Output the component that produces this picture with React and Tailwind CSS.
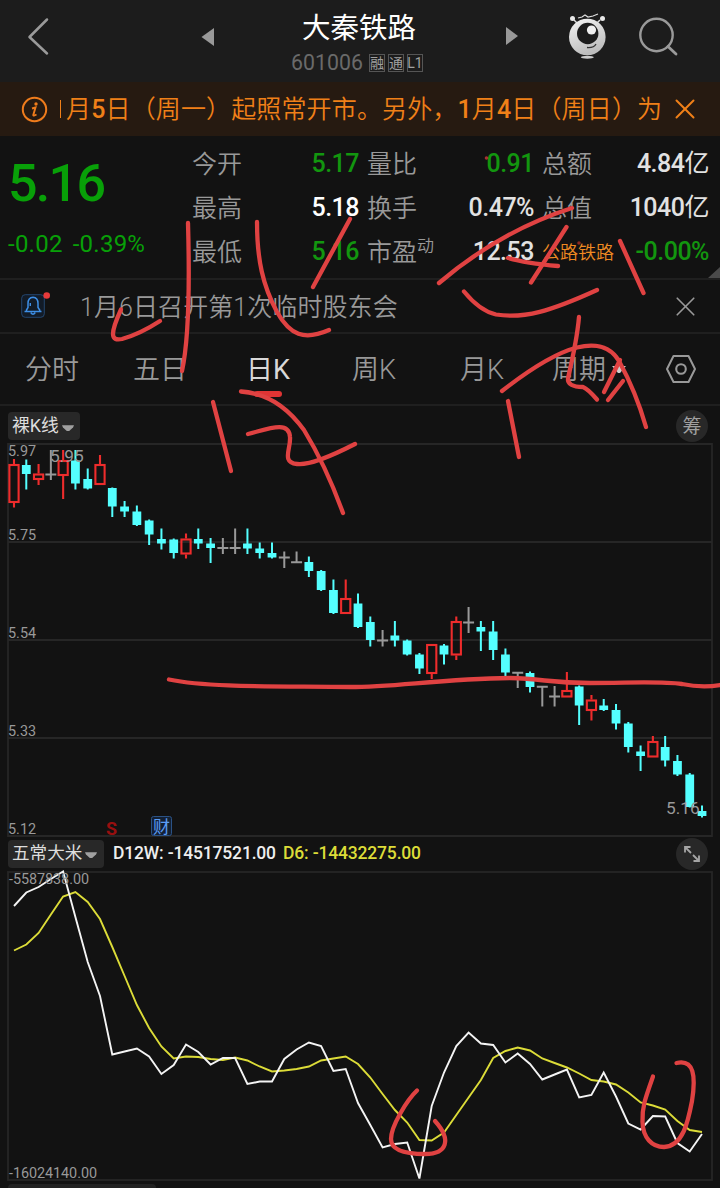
import React from 'react';
import { X } from 'lucide-react';

const UP = '#ee2c2c';
const DOWN = '#54ffff';
const FLAT = '#999999';

// [kind, high, bodyTop, bodyBottom, low] - y values in page space
const candles = [
  ['u', 459, 464, 503, 507.5], ['d', 459.5, 465, 474, 489.5], ['u', 464, 473.5, 480, 485],
  ['f', 450, 474.5, 474.5, 480], ['u', 450, 460, 476, 499], ['d', 450, 460.5, 483.5, 489.5],
  ['d', 468.5, 479, 488.5, 489.5], ['u', 455, 464, 485, 485], ['d', 487.5, 488, 506.5, 517],
  ['d', 501, 506.5, 511.5, 517], ['d', 505.5, 511.5, 525, 526], ['d', 519.5, 520.5, 534.5, 545],
  ['d', 528.5, 539, 543.5, 549.5], ['d', 538.5, 539.5, 553, 558.5], ['u', 533.5, 538.5, 554.5, 558.5],
  ['d', 528.5, 539, 543.5, 549], ['d', 538, 543.5, 548, 563], ['f', 538, 548, 548, 554],
  ['f', 528.5, 548, 548, 554], ['d', 528.5, 543.5, 548.5, 554], ['d', 542.5, 548.5, 553, 558.5],
  ['d', 542.5, 553, 557.5, 558.5], ['f', 551.5, 557.5, 557.5, 568], ['f', 551.5, 562.3, 562.3, 563],
  ['d', 556.5, 562, 571, 577], ['d', 570, 571, 590, 591], ['d', 579.5, 590, 613, 614],
  ['u', 579.5, 598, 614, 614], ['d', 593.5, 603.5, 627, 628], ['d', 616.5, 622, 640, 646.5],
  ['f', 630, 640.5, 640.5, 646.5], ['d', 621, 635.5, 640.5, 646.5], ['d', 639.5, 640.5, 654.5, 655.5],
  ['d', 653, 654.5, 668.5, 674], ['u', 644, 644, 674, 679], ['d', 644, 645.5, 654.5, 664.5],
  ['u', 616.5, 621, 655.5, 660], ['f', 607, 622.5, 622.5, 633], ['d', 621, 627, 631.5, 651],
  ['d', 621, 631.5, 650, 660], ['d', 648.5, 654.5, 672.5, 676.5], ['f', 672, 672.7, 672.7, 688],
  ['d', 671.5, 673, 687, 692.5], ['f', 686, 686.7, 686.7, 706.5], ['f', 686, 696.5, 696.5, 706.5],
  ['u', 672, 690, 697.5, 697.5], ['d', 685.5, 686.5, 705.5, 725], ['u', 695, 699.5, 711, 720.5],
  ['d', 699, 705.5, 710, 711], ['d', 704, 710, 723.5, 729.5], ['d', 722, 723.5, 747, 752.5],
  ['d', 745.5, 751.5, 756, 771], ['u', 736, 741, 757.5, 757.5], ['d', 736, 747, 760.5, 766.5],
  ['d', 755, 761, 774.5, 776], ['d', 773, 774.5, 807, 807.5], ['d', 805.5, 811, 816, 817.5],
];

const d12w = [
  906, 892.5, 887, 879, 871.5, 917, 962, 996, 1054.5, 1051.5, 1048.5, 1056.5, 1074, 1065, 1044.5, 1052,
  1064.5, 1058, 1058, 1084, 1081.5, 1081.5, 1059, 1049.5, 1042.5, 1046, 1071, 1069, 1103, 1125, 1147.5,
  1144, 1142.5, 1178.5, 1106, 1072.5, 1046, 1032.5, 1043.5, 1045, 1062.5, 1053.5, 1064, 1079.5, 1074.5,
  1069.5, 1097.5, 1095, 1072.5, 1096.5, 1123.5, 1129.5, 1116, 1116.5, 1143, 1151.5, 1134,
];

const d6 = [
  950.5, 944.5, 933, 914.5, 896.5, 892, 902, 919, 947, 976, 1005, 1028, 1046.5, 1058.5, 1056.5, 1057,
  1059, 1060, 1057.5, 1060.5, 1066.5, 1071.5, 1070.5, 1069, 1066.5, 1060.5, 1058.5, 1056.5, 1064, 1077.5,
  1094, 1110, 1122.5, 1140, 1140.5, 1132.5, 1115, 1097.5, 1080, 1058, 1051, 1047.5, 1050.5, 1058.5, 1063,
  1067.5, 1073.5, 1080, 1081.5, 1084.5, 1092.5, 1102.5, 1105.5, 1109.5, 1121, 1130, 1132,
];

const xAt = (i) => 14 + i * 12.286;
const toPoints = (ys) => ys.map((y, i) => `${xAt(i).toFixed(1)},${y}`).join(' ');

// Hand drawn red pen strokes
const strokes = [
  'M121 309.5Q113 327 113 334Q113 341 122 339Q140 334 160 321',
  'M188 223Q191 330 182 371',
  'M257 222C257 260 263 286 277 312C290 335 304 341 329 330',
  'M350 219L313 287',
  'M213 402L231 471',
  'M241 391.5C265 393 286 405 304 430Q326 466 343 513',
  'M248 434C268 429 289 420 290 437C291 449 281 462 297 464Q312 466 355 444',
  'M439 283Q500 231 572 208',
  'M566.5 227L531 282.5',
  'M508 258Q525 263 558 266',
  'M464 291.5Q480 311 496 314.5C524 319 551 311 597 290',
  'M620 241L643.5 293',
  'M579 317Q577 340 568 378Q567 387 583 387Q588 389 597 399.5',
  'M502 391Q548 355 577 347.5C596 343 610 346 619 361Q636 392 646 427',
  'M620 360L604 392',
  'M623 381L608 400',
  'M508 401L519 457',
  'M169 679.5C210 688 280 686 350 687C395 687 440 679 510 678C545 679 550 683 590 683C630 683 660 681 682 684Q702 688 720 685',
  'M417 1090.5C407 1100 391 1126 391 1139C391 1151 407 1154 425 1154C447 1154 452 1140 435 1121',
  'M653 1076.5C645 1099 642 1107 642.5 1122C643 1138 652 1147 664 1147C683 1146 688 1122 692 1101C696 1076 694 1059 676.5 1063',
];

const quotes = [
  [
    { label: '今开', value: '5.17', color: 'text-[#12960f]' },
    { label: '最高', value: '5.18', color: 'text-white' },
    { label: '最低', value: '5.16', color: 'text-[#12960f]' },
  ],
  [
    { label: '量比', value: '0.91', color: 'text-[#12960f]' },
    { label: '换手', value: '0.47%', color: 'text-[#e2e2e2]' },
    { label: '市盈', sup: '动', value: '12.53', color: 'text-[#e2e2e2]' },
  ],
  [
    { label: '总额', value: '4.84', unit: '亿', color: 'text-[#e2e2e2]' },
    { label: '总值', value: '1040', unit: '亿', color: 'text-[#e2e2e2]' },
    { label: '公路铁路', small: true, value: '-0.00%', color: 'text-[#12960f]' },
  ],
];

const Caret = () => (
  <svg width="14" height="8" viewBox="0 0 14 8" className="mt-[3px] shrink-0">
    <path d="M1 1.2H13L12 3.4L8.2 7H5.8L2 3.4Z" fill="#a0a0a0" />
  </svg>
);

const Mascot = () => (
  <svg width="40" height="48" viewBox="0 0 40 48">
    <defs>
      <linearGradient id="ball" x1="0" y1="0" x2="0.4" y2="1">
        <stop offset="0" stopColor="#f4f4f4" />
        <stop offset="1" stopColor="#bdbdbd" />
      </linearGradient>
    </defs>
    <path d="M7 8L11 12M33 8L29 12" stroke="#ddd" strokeWidth="1.5" />
    <circle cx="5.5" cy="6.5" r="2.5" fill="#e8e8e8" />
    <circle cx="35.5" cy="6.5" r="2.5" fill="#e8e8e8" />
    <path d="M11 6L15 5L18 3L21 5L26 4L31 2" fill="none" stroke="#ddd" strokeWidth="1.2" />
    <circle cx="20.3" cy="25" r="18.3" fill="url(#ball)" />
    <circle cx="20.7" cy="21.5" r="10.7" fill="#1c1c1c" />
    <circle cx="24.5" cy="18" r="4.6" fill="#efefef" />
    <path d="M20 35.5Q27 36 29 32" fill="none" stroke="#333" strokeWidth="1.3" />
    <ellipse cx="20.3" cy="45.3" rx="6.5" ry="1.5" fill="#ccc" />
  </svg>
);

const Header = () => (
  <header className="flex h-[82px] shrink-0 items-start bg-[#1c1c1c]">
    <svg width="24" height="40" viewBox="0 0 24 40" className="mt-[17px] ml-[26px]">
      <path d="M21 2.5L3.5 20L21 36.5" fill="none" stroke="#9a9a9a" strokeWidth="2.5" strokeLinecap="round" strokeLinejoin="round" />
    </svg>
    <svg width="14" height="20" viewBox="0 0 14 20" className="mt-[27px] ml-[151px]">
      <path d="M13 1V19L0.5 10Z" fill="#999" />
    </svg>
    <div className="ml-[69px] flex w-[150px] flex-col items-center">
      <h1 className="mt-[13px] whitespace-nowrap text-[28.5px] leading-[32px] font-normal text-white">大秦铁路</h1>
      <div className="mt-[7px] mr-[4px] flex items-center gap-[3px] whitespace-nowrap">
        <span className="mr-[3px] text-[21.3px] leading-[22px] text-[#6a6a6a]">601006</span>
        {['融', '通', 'L1'].map((tag) => (
          <span key={tag} className="flex h-[18px] w-4 items-center justify-center border border-[#555] text-[14px] leading-none text-[#a0a0a0]">
            {tag}
          </span>
        ))}
      </div>
    </div>
    <svg width="14" height="20" viewBox="0 0 14 20" className="mt-[26px] ml-[71px]">
      <path d="M1 1V19L13 10Z" fill="#999" />
    </svg>
    <div className="mt-[12px] ml-[48px]"><Mascot /></div>
    <svg width="42" height="42" viewBox="0 0 42 42" className="mt-[16px] ml-[31px]">
      <circle cx="18.5" cy="19" r="16.2" fill="none" stroke="#9a9a9a" strokeWidth="2.4" />
      <path d="M30 30.5L38 38" stroke="#9a9a9a" strokeWidth="2.8" strokeLinecap="round" />
    </svg>
  </header>
);

const Notice = () => (
  <div className="flex h-[54px] shrink-0 items-center bg-[#261a11] pl-[21px] text-[#f08018]">
    <svg width="27" height="27" viewBox="0 0 27 27" className="shrink-0">
      <circle cx="13.5" cy="13.5" r="11.7" fill="none" stroke="#ef7c1c" strokeWidth="2" />
      <circle cx="15" cy="8" r="1.7" fill="#ef7c1c" />
      <path d="M11 12.5L14.5 11.5L12.3 19Q12.2 20.3 15.5 18.5" fill="none" stroke="#ef7c1c" strokeWidth="1.9" />
    </svg>
    <span className="ml-[12px] h-[18px] w-px bg-[#f08018]" />
    <p className="mt-[2px] ml-[5px] w-[597px] overflow-hidden text-[25px] leading-[36px] font-[350] tracking-[0.14px] whitespace-nowrap">
      月<b className="font-medium">5</b>日（周一）起照常开市。另外，<b className="font-medium">1</b>月<b className="font-medium">4</b>日（周日）为
    </p>
    <X size={34} strokeWidth={1.4} className="ml-[5px] shrink-0" />
  </div>
);

const Quotes = () => (
  <section className="relative flex h-[144px] shrink-0 border-b-2 border-[#1f1f1f]">
    <div className="w-[192px] pl-[8px] text-[#08a008]">
      <div className="mt-[22px] text-[52px] leading-[52px] font-medium tracking-[-1.7px]">5.16</div>
      <div className="mt-[21px] flex gap-[10px] text-[24px] leading-[26px] tracking-[0.25px]">
        <span>-0.02</span>
        <span>-0.39%</span>
      </div>
    </div>
    <div className="mt-[5px] grid grid-cols-[167px_167px_167px] gap-x-2">
      {quotes.map((col, c) => (
        <div key={c}>
          {col.map((q) => (
            <div key={q.label} className="flex h-11 items-center justify-between whitespace-nowrap">
              <span className={q.small ? 'mt-[3px] text-[18px] leading-none font-[350] text-[#ef8a22]' : 'mt-[2px] text-[25px] leading-none font-[350] text-[#999]'}>
                {q.label}
                {q.sup && <span className="relative -top-[9px] text-[17px]">{q.sup}</span>}
              </span>
              <span className={`mt-px text-[25px] leading-none font-medium tracking-[-0.5px] ${q.color}`}>
                {q.value}
                {q.unit && <span className="font-normal">{q.unit}</span>}
              </span>
            </div>
          ))}
        </div>
      ))}
    </div>
    <svg width="12" height="11" viewBox="0 0 12 11" className="absolute right-0 bottom-0">
      <path d="M12 0V11H0Z" fill="#4a4a4a" />
    </svg>
  </section>
);

const EventRow = () => (
  <section className="flex h-[54px] shrink-0 items-center border-b-2 border-[#1f1f1f] pl-[21px] text-[#999]">
    <svg width="31" height="30" viewBox="0 0 31 30" className="-mt-1 shrink-0">
      <rect x="0.7" y="5.7" width="22.6" height="22.6" rx="3.5" fill="#121b27" stroke="#23466f" />
      <path d="M3.5 22.5H20.5M5.5 22V21L7 18.5V14.5Q7 8.5 12 8.2Q17 8.5 17 14.5V18.5L18.7 21V22" fill="none" stroke="#3e8fe6" strokeWidth="1.5" />
      <path d="M9.7 23.5Q12 27 14.3 23.5M9.3 14V17" fill="none" stroke="#3e8fe6" strokeWidth="1.4" />
      <circle cx="25.7" cy="6.5" r="3.3" fill="#e83a3a" />
    </svg>
    <p className="mt-[3px] ml-[28px] w-[586px] text-[25px] leading-[34px] font-[350] tracking-[0.08px] whitespace-nowrap">1月6日召开第1次临时股东会</p>
    <X size={33} strokeWidth={1.2} className="ml-[3px] shrink-0" />
  </section>
);

const Tabs = () => (
  <nav className="flex h-[72px] shrink-0 items-center border-b-2 border-[#1f1f1f] text-[27px] leading-none font-[350] text-[#999] whitespace-nowrap">
    <span className="mt-[3px] ml-[25px] w-[108px]">分时</span>
    <span className="mt-[3px] w-[113px]">五日</span>
    <span className="relative mt-[3px] w-[106px] font-normal text-[#d8d8d8]">
      日K
      <i className="absolute top-[34px] left-[8px] h-[6px] w-[28px] rounded-full bg-[#e03434]" />
    </span>
    <span className="mt-[3px] w-[108px]">周K</span>
    <span className="mt-[3px] w-[92px]">月K</span>
    <span className="mt-[3px] w-[54px]">周期</span>
    <svg width="14" height="9" viewBox="0 0 14 9" className="ml-[6px]">
      <path d="M0 1H14L8 8H6Z" fill="#ccc" />
    </svg>
    <svg width="32" height="30" viewBox="0 0 32 30" className="ml-[39px]">
      <path d="M8.5 2H23.5L30 15L23.5 28H8.5L2 15Z" fill="none" stroke="#999" strokeWidth="2" strokeLinejoin="round" />
      <circle cx="16" cy="15" r="4.8" fill="none" stroke="#999" strokeWidth="2.1" />
    </svg>
  </nav>
);

const PriceChart = () => (
  <svg width="720" height="394" viewBox="0 443 720 394" className="block shrink-0 overflow-visible">
    <path d="M8 444H712V836H8ZM8 542H712M8 640H712M8 738H712" fill="none" stroke="#262626" strokeWidth="1.8" />
    {candles.map(([kind, high, top, bottom, low], i) => {
      const x = xAt(i);
      if (kind === 'f') {
        return <path key={i} d={`M${x} ${high}V${low}M${x - 5.5} ${top}H${x + 5.5}`} stroke={FLAT} strokeWidth="2" />;
      }
      if (kind === 'd') {
        return (
          <g key={i} fill={DOWN}>
            <rect x={x - 1} y={high} width="2" height={low - high} />
            <rect x={x - 4.4} y={top} width="8.8" height={bottom - top} />
          </g>
        );
      }
      return (
        <g key={i} fill="none" stroke={UP} strokeWidth="2.1">
          <path d={`M${x} ${high}V${top}M${x} ${bottom}V${low}`} />
          <rect x={x - 4.6} y={top + 1} width="9.2" height={bottom - top - 2} />
        </g>
      );
    })}
    <g fill="#999" fontSize="14.4">
      <text x="8" y="456">5.97</text>
      <text x="8" y="540">5.75</text>
      <text x="8" y="638">5.54</text>
      <text x="8" y="736">5.33</text>
      <text x="8" y="834">5.12</text>
      <text x="50" y="461.5" fontSize="17.3">5.95</text>
      <text x="666" y="814" fontSize="17.3">5.16</text>
    </g>
    <text x="106" y="834.5" fontSize="18" fontWeight="700" fill="#980f0f">S</text>
    <rect x="151.5" y="816.5" width="20" height="19" rx="2" fill="#132033" stroke="#2b5285" />
    <text x="153" y="832.5" fontSize="17" fill="#5b9cf5">财</text>
  </svg>
);

const IndicatorChart = () => (
  <svg width="720" height="311" viewBox="0 870 720 311" className="block shrink-0">
    <rect x="8" y="872" width="704" height="308" fill="none" stroke="#262626" strokeWidth="1.8" />
    <polyline points={toPoints(d6)} fill="none" stroke="#dcdc38" strokeWidth="1.9" />
    <polyline points={toPoints(d12w)} fill="none" stroke="#f4f4f4" strokeWidth="1.9" />
    <g fill="#999" fontSize="14.4">
      <text x="9" y="884" textLength="80">-5587838.00</text>
      <text x="9" y="1178" textLength="88">-16024140.00</text>
    </g>
  </svg>
);

const PenMarks = () => (
  <svg width="720" height="1188" viewBox="0 0 720 1188" className="pointer-events-none absolute inset-0">
    <g fill="none" stroke="#e04242" strokeWidth="4.3" strokeLinecap="round" strokeLinejoin="round">
      {strokes.map((d) => <path key={d} d={d} />)}
    </g>
    <circle cx="486.5" cy="158" r="1.8" fill="#a83232" />
    <circle cx="579" cy="243" r="1.8" fill="#8a2a22" />
  </svg>
);

export default function App() {
  return (
    <div className="relative flex h-[1188px] w-[720px] flex-col overflow-hidden bg-[#121212] font-[Roboto,'Noto_Sans_CJK_SC',sans-serif]">
      <Header />
      <Notice />
      <Quotes />
      <EventRow />
      <Tabs />

      <div className="flex h-[37px] shrink-0 items-center justify-between pt-[3px] pr-[12px] pl-2">
        <button className="flex h-7 w-[72px] items-center gap-[2px] rounded bg-[#282828] pl-1 text-[17.8px] leading-none whitespace-nowrap text-[#ddd]">
          裸K线 <Caret />
        </button>
        <span className="flex size-8 items-center justify-center rounded-full bg-[#282828] pt-px text-[19px] leading-none text-[#a0a0a0]">筹</span>
      </div>
      <PriceChart />

      <div className="flex h-[33px] shrink-0 items-center pr-[12px] pl-2 text-[17.5px] leading-none whitespace-nowrap">
        <button className="flex h-7 w-[96px] items-center gap-[2px] rounded bg-[#282828] pl-1 text-[17.6px] leading-none text-[#ddd]">
          五常大米 <Caret />
        </button>
        <span className="ml-[9px] w-[170px] font-medium tracking-[-0.17px] text-[#eee]">D12W: -14517521.00</span>
        <span className="font-medium tracking-[-0.17px] text-[#dcdc38]">D6: -14432275.00</span>
        <span className="ml-auto flex size-8 items-center justify-center rounded-full bg-[#282828]">
          <svg width="18" height="18" viewBox="0 0 18 18" fill="none" stroke="#a5a5a5" strokeWidth="1.8">
            <path d="M2 7.5V2H7.5M2 2L8 8M16 10.5V16H10.5M16 16L10 10" />
          </svg>
        </span>
      </div>
      <IndicatorChart />

      <div className="mt-[3px] ml-2 h-6 w-[148px] shrink-0 rounded bg-[#222]" />
      <PenMarks />
    </div>
  );
}
